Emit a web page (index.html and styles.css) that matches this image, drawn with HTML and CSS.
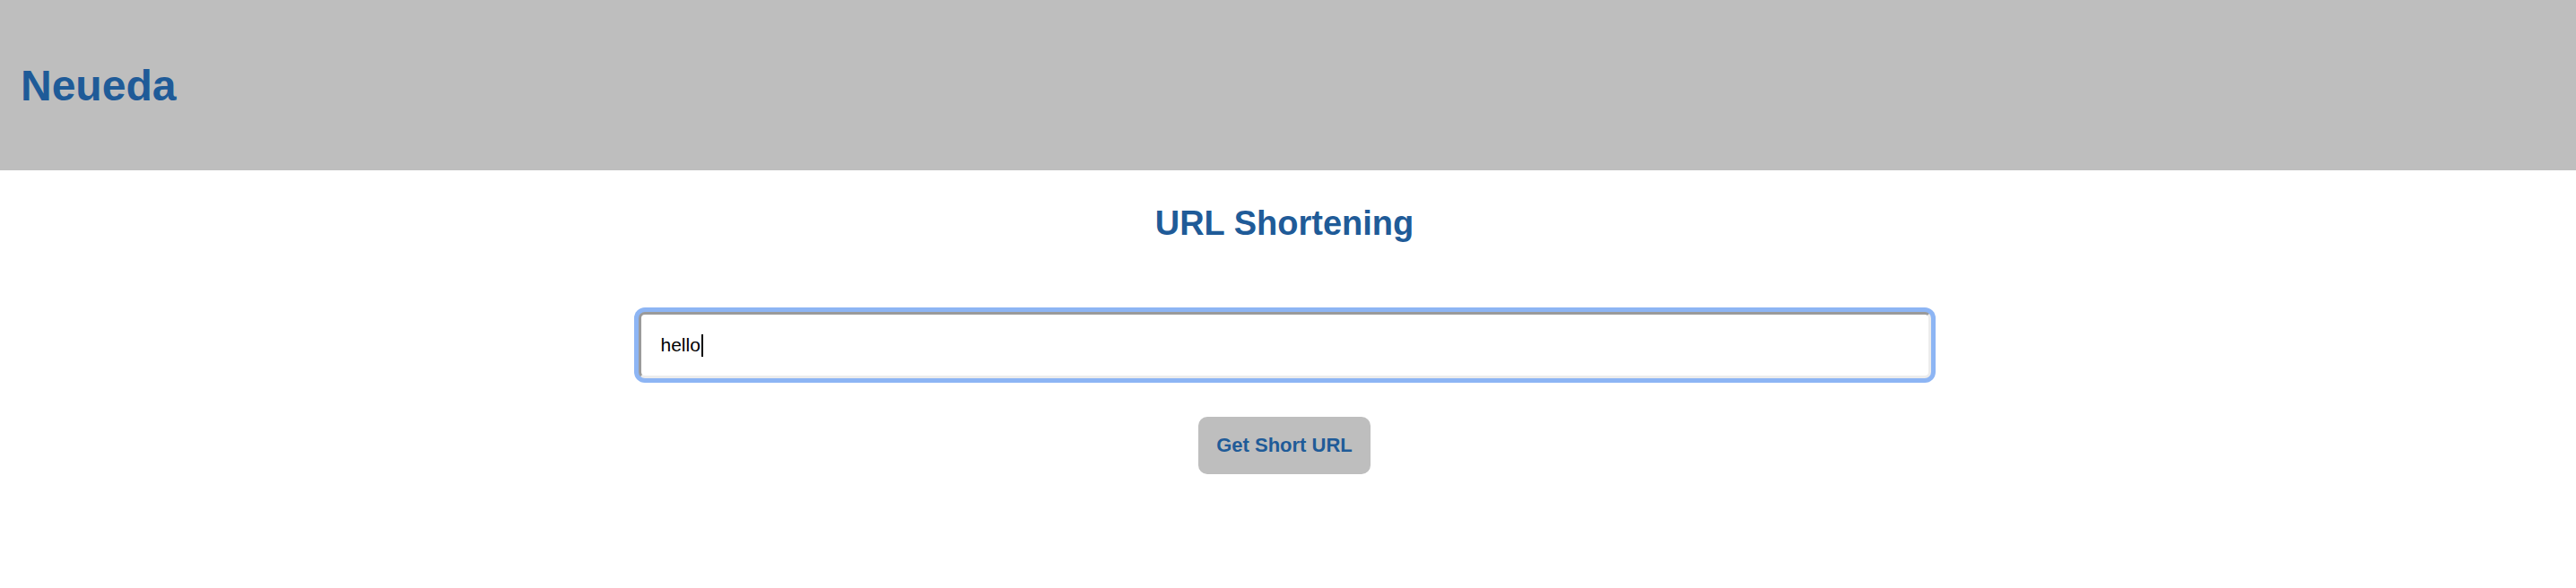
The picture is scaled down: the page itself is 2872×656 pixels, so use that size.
FILE: index.html
```html
<!DOCTYPE html>
<html lang="en">
<head>
<meta charset="utf-8">
<title>Neueda URL Shortening</title>
<link rel="stylesheet" href="styles.css">
</head>
<body>
<header class="site-header">
  <h1 class="brand">Neueda</h1>
</header>
<main class="main">
  <h2 class="page-title">URL Shortening</h2>
  <form class="shorten-form" onsubmit="return false;">
    <div class="field"><span class="field-text">hello</span><span class="caret"></span></div>
    <button class="submit" type="button">Get Short URL</button>
  </form>
</main>
</body>
</html>
```
FILE: styles.css
```css
html, body {
  margin: 0;
  padding: 0;
  background: #ffffff;
  font-family: "Liberation Sans", Arial, sans-serif;
}

.site-header {
  height: 190px;
  background: #bebebe;
  display: flex;
  align-items: center;
  padding-left: 23px;
  box-sizing: border-box;
}

.brand {
  margin: 0;
  font-size: 48px;
  font-weight: 700;
  color: #1f5b98;
}

.main {
  display: flex;
  flex-direction: column;
  align-items: center;
  padding-right: 8px;
}

.page-title {
  margin: 38px 0 0;
  font-size: 38px;
  font-weight: 700;
  color: #1f5b98;
}

.shorten-form {
  display: flex;
  flex-direction: column;
  align-items: center;
  margin-top: 77px;
}

.field {
  width: 1441px;
  height: 74px;
  box-sizing: border-box;
  border: 3px solid;
  border-color: #9a9a9a #ececec #ececec #9a9a9a;
  border-radius: 7px;
  box-shadow: 0 0 0 5px #8db5f4;
  padding: 0 22px;
  display: flex;
  align-items: center;
  font-size: 21px;
  color: #000;
  background: #fff;
}

.caret {
  display: inline-block;
  width: 2px;
  height: 25px;
  background: #000;
  margin-left: 1px;
}

.submit {
  margin-top: 43px;
  width: 192px;
  height: 64px;
  border: none;
  border-radius: 10px;
  background: #bebebe;
  color: #1f5b98;
  font-family: "Liberation Sans", Arial, sans-serif;
  font-size: 22px;
  font-weight: 700;
  padding: 0;
  cursor: pointer;
}
```
